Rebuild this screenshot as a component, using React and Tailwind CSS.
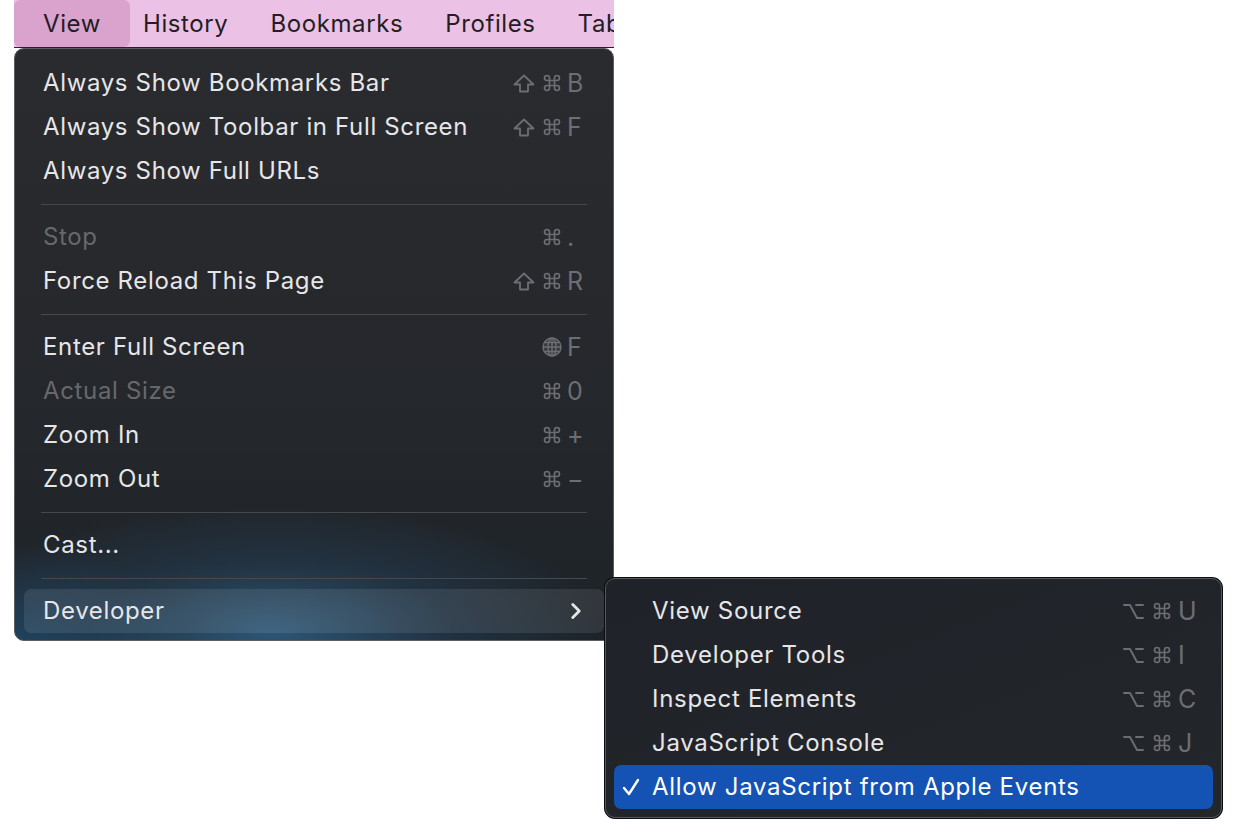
import React from 'react';
import { ChevronRight } from 'lucide-react';

const Cmd = () => (
  <svg width="20" height="20" viewBox="0 0 24 24" fill="none" stroke="currentColor" strokeWidth="2" strokeLinecap="round" strokeLinejoin="round">
    <path d="M15 6v12a3 3 0 1 0 3-3H6a3 3 0 1 0 3 3V6a3 3 0 1 0-3 3h12a3 3 0 1 0-3-3" />
  </svg>
);

const Shift = () => (
  <svg width="22" height="19" viewBox="0 0 22 19" fill="none" stroke="currentColor" strokeWidth="1.8" strokeLinejoin="round">
    <path d="M11 1.5 L20.5 10.5 H15 V17.5 H7 V10.5 H1.5 Z" />
  </svg>
);

const Opt = () => (
  <svg width="21" height="17" viewBox="0 0 21 17" fill="none" stroke="currentColor" strokeWidth="1.9" strokeLinecap="round" strokeLinejoin="round">
    <path d="M1 2 H7 L14 15 H20" />
    <path d="M13 2 H20" />
  </svg>
);

const GlobeKey = () => (
  <svg width="20" height="20" viewBox="0 0 20 20" fill="none" stroke="currentColor" strokeWidth="1.4">
    <circle cx="10" cy="10" r="9" fill="currentColor" fillOpacity="0.25" />
    <ellipse cx="10" cy="10" rx="4" ry="9" />
    <path d="M10 1 V19 M1 10 H19 M2.5 5.5 H17.5 M2.5 14.5 H17.5" />
  </svg>
);

const Check = () => (
  <svg width="20" height="20" viewBox="0 0 20 20" fill="none" stroke="currentColor" strokeWidth="2.4" strokeLinecap="round" strokeLinejoin="round">
    <path d="M3 11 L8 17 L17 3" />
  </svg>
);

function Shortcut({ mods, k, gap = 'gap-[7px]', keyGap = 'ml-[5px]' }) {
  return (
    <div className="flex items-center text-[#6c6e73]">
      <div className={`flex items-center ${gap}`}>
        {mods.map((m, i) => (
          <span key={i} className="flex items-center">
            {m === 'shift' && <Shift />}
            {m === 'cmd' && <Cmd />}
            {m === 'opt' && <Opt />}
            {m === 'globe' && <GlobeKey />}
          </span>
        ))}
      </div>
      <span className={`w-[18px] text-[25px] leading-none ${keyGap}`}>{k}</span>
    </div>
  );
}

function Row({ label, disabled, mods, k, highlight, chevron }) {
  return (
    <div
      className={`h-[44px] flex items-center justify-between px-[19px] rounded-[7px] ${
        highlight ? 'bg-white/[0.09]' : ''
      }`}
    >
      <span className={`text-[24px] leading-none tracking-[0.65px] ${disabled ? 'text-[#67686c]' : 'text-[#e6e6e8]'}`}>{label}</span>
      {mods && <Shortcut mods={mods} k={k} />}
      {chevron && <ChevronRight size={26} strokeWidth={2.6} className="text-[#e6e6e8] -mr-[4px]" />}
    </div>
  );
}

function Sep() {
  return (
    <div className="h-[22px] flex items-center px-[17px]">
      <div className="h-px w-full bg-[#46484d]" />
    </div>
  );
}

function SubRow({ label, k, checked }) {
  return (
    <div
      className={`relative h-[44px] flex items-center justify-between pl-[38px] pr-[17px] rounded-[7px] ${
        checked ? 'bg-[#1453b3]' : ''
      }`}
    >
      {checked && (
        <span className="absolute left-[7px] top-[12px] text-white">
          <Check />
        </span>
      )}
      <span className={`text-[24px] leading-none tracking-[0.7px] ${checked ? 'text-white' : 'text-[#e6e6e8]'}`}>{label}</span>
      {k && <Shortcut mods={['opt', 'cmd']} k={k} gap="gap-[8px]" keyGap="ml-[6px]" />}
    </div>
  );
}

export default function App() {
  return (
    <div className="relative w-[1236px] h-[834px] bg-white overflow-hidden [font-family:Inter,'Noto_Sans',sans-serif]">
      <div className="ml-[14px] w-[600px] flex flex-col">
        {/* menu bar */}
        <div className="h-[48px] bg-[#ebc2e5] border-b border-[#2a1d27] flex items-stretch text-[24px] tracking-[0.6px] text-[#241d24] overflow-hidden">
          <div className="w-[116px] shrink-0 flex items-center justify-center bg-[#d9a3cd] rounded-[6px]">View</div>
          <div className="flex items-center gap-[42px] ml-[13px] whitespace-nowrap">
            <span>History</span>
            <span>Bookmarks</span>
            <span>Profiles</span>
            <span>Tab</span>
          </div>
        </div>

        {/* View menu */}
        <div className="rounded-[10px] border border-[#5a5d62] bg-[#26282c] bg-[radial-gradient(ellipse_330px_125px_at_256px_582px,rgba(52,108,150,0.7),rgba(40,82,118,0.3)_55%,transparent_100%),radial-gradient(ellipse_170px_100px_at_0px_594px,rgba(30,72,104,0.75),transparent),linear-gradient(to_bottom,#2a2b2f,#24272b_65%,#1d2329)] pt-[12px] pb-[7px] px-[9px]">
          <Row label="Always Show Bookmarks Bar" mods={['shift', 'cmd']} k="B" />
          <Row label="Always Show Toolbar in Full Screen" mods={['shift', 'cmd']} k="F" />
          <Row label="Always Show Full URLs" />
          <Sep />
          <Row label="Stop" disabled mods={['cmd']} k="." />
          <Row label="Force Reload This Page" mods={['shift', 'cmd']} k="R" />
          <Sep />
          <Row label="Enter Full Screen" mods={['globe']} k="F" />
          <Row label="Actual Size" disabled mods={['cmd']} k="0" />
          <Row label="Zoom In" mods={['cmd']} k="+" />
          <Row label="Zoom Out" mods={['cmd']} k="−" />
          <Sep />
          <Row label="Cast..." />
          <Sep />
          <Row label="Developer" highlight chevron />
        </div>
      </div>

      {/* Developer submenu */}
      <div className="absolute left-[605px] top-[578px] w-[617px] rounded-[10px] border border-[#55585d] bg-[#1f2328] bg-[linear-gradient(to_bottom_right,#1f2329,#23262b)] pt-[10px] pb-[8px] px-[8px] shadow-[0_0_0_1px_#0b0c0e]">
        <SubRow label="View Source" k="U" />
        <SubRow label="Developer Tools" k="I" />
        <SubRow label="Inspect Elements" k="C" />
        <SubRow label="JavaScript Console" k="J" />
        <SubRow label="Allow JavaScript from Apple Events" checked />
      </div>
    </div>
  );
}
